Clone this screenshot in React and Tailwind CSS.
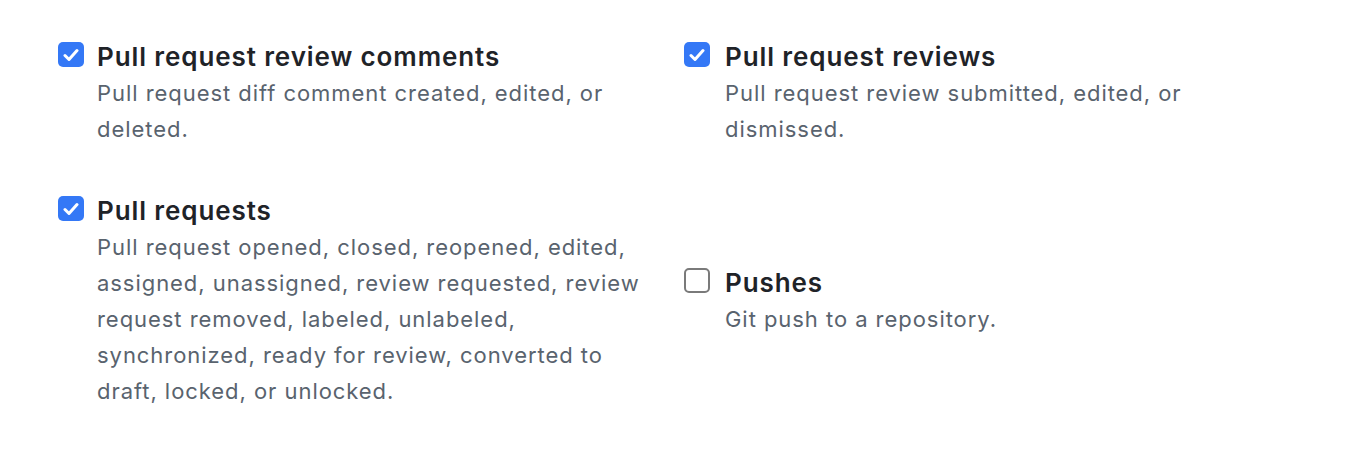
import React from "react";

function Box({ checked }) {
  if (checked) {
    return (
      <div className="w-[26px] h-[25px] rounded-[5px] bg-[#3478f6] flex items-center justify-center shrink-0 mt-[3px]">
        <svg width="16" height="14" viewBox="0 0 16 14">
          <path d="M2 7.5 L6 11.5 L14 2.5" fill="none" stroke="white" strokeWidth="3" strokeLinecap="round" strokeLinejoin="round" />
        </svg>
      </div>
    );
  }
  return <div className="w-[26px] h-[25px] rounded-[5px] border-2 border-[#7a7a7a] bg-white shrink-0 mt-[3px]" />;
}

function Item({ checked, title, desc, gap = "gap-[13px]" }) {
  return (
    <div className={"flex " + gap}>
      <Box checked={checked} />
      <div className="flex flex-col">
        <div className="text-[26px] leading-[36px] font-semibold text-[#1f2328] tracking-[0.9px]">{title}</div>
        <div className="text-[22px] leading-[36px] text-[#59636e] tracking-[0.95px]">{desc}</div>
      </div>
    </div>
  );
}

export default function App() {
  return (
    <div className="w-[1358px] h-[450px] bg-white" style={{ fontFamily: "Inter, 'Noto Sans', sans-serif" }}>
      <div className="grid grid-cols-[626px_626px] gap-y-[46px] pl-[58px] pt-[39px]">
        <div className="w-[580px]">
          <Item checked title="Pull request review comments" desc="Pull request diff comment created, edited, or deleted." />
        </div>
        <div className="w-[520px]">
          <Item checked gap="gap-[15px]" title="Pull request reviews" desc="Pull request review submitted, edited, or dismissed." />
        </div>
        <div className="w-[590px]">
          <Item checked title="Pull requests" desc="Pull request opened, closed, reopened, edited, assigned, unassigned, review requested, review request removed, labeled, unlabeled, synchronized, ready for review, converted to draft, locked, or unlocked." />
        </div>
        <div className="flex items-center">
          <Item gap="gap-[15px]" title="Pushes" desc="Git push to a repository." />
        </div>
      </div>
    </div>
  );
}
